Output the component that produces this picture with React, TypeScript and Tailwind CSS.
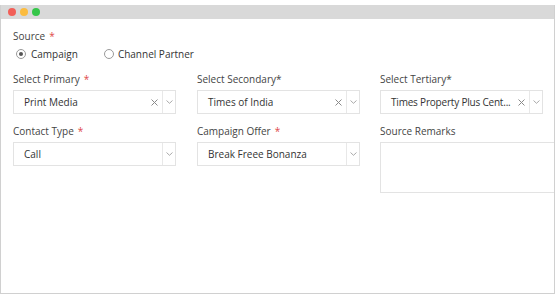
import React from "react";

const font = { fontFamily: '"Open Sans", "Liberation Sans", sans-serif' };

function Label({ text, required, tight }: { text: string; required?: boolean; tight?: boolean }) {
  return (
    <div className="h-[14px] text-[10px] leading-[14px] text-[#444]">
      {text}
      {required && (tight ? <span className="text-[#444]">*</span> : <span className="ml-[4px] text-[#e04848]">*</span>)}
    </div>
  );
}

function Chevron() {
  return (
    <svg width="7" height="4" viewBox="0 0 7 4" fill="none">
      <path d="M0.5 0.5 L3.5 3.3 L6.5 0.5" stroke="#a0a0a0" strokeWidth="0.9" />
    </svg>
  );
}

function Cross() {
  return (
    <svg width="7" height="7" viewBox="0 0 7 7" fill="none">
      <path d="M0.5 0.5 L6.5 6.5 M6.5 0.5 L0.5 6.5" stroke="#8a8a8a" strokeWidth="1" />
    </svg>
  );
}

function Select({ value, clearable, long }: { value: string; clearable?: boolean; long?: boolean }) {
  return (
    <div className="mt-[4px] flex h-[24px] w-[163px] items-center border border-[#e3e3e3] bg-white">
      <div
        className={
          long
            ? "min-w-0 flex-1 whitespace-nowrap pl-[10px] text-[10px] tracking-[-0.2px] text-[#333]"
            : "min-w-0 flex-1 overflow-hidden whitespace-nowrap pl-[10px] text-[10px] text-[#333]"
        }
      >
        {value}
      </div>
      {clearable && (
        <div className="flex w-[15px] items-center justify-center">
          <Cross />
        </div>
      )}
      <div className="flex h-full w-[13px] items-center justify-center border-l border-[#e8e8e8]">
        <Chevron />
      </div>
    </div>
  );
}

export default function App() {
  return (
    <div className="h-[299px] w-[555px] overflow-hidden bg-white pt-[5px]" style={font}>
      <div className="h-[289px] w-[555px] overflow-hidden border-b border-l border-r border-[#d0d0d0] bg-white">
        <div className="flex h-[14px] items-center gap-[4px] bg-[#d9d9d9] pl-[7px]">
          <span className="h-[8px] w-[8px] rounded-full bg-[#f25f58]" />
          <span className="h-[8px] w-[8px] rounded-full bg-[#fbbc40]" />
          <span className="h-[8px] w-[8px] rounded-full bg-[#35c649]" />
        </div>
        <div className="pl-[12px] pt-[10px]">
          <Label text="Source" required />
          <div className="mt-[4px] flex h-[14px] items-center text-[10px] text-[#333]">
            <span className="ml-[3px] flex h-[10px] w-[10px] items-center justify-center rounded-full border border-[#9a9a9a]">
              <span className="h-[4px] w-[4px] rounded-full bg-[#555]" />
            </span>
            <span className="ml-[5px]">Campaign</span>
            <span className="ml-[26px] h-[10px] w-[10px] rounded-full border border-[#9a9a9a]" />
            <span className="ml-[4px]">Channel Partner</span>
          </div>
          <div className="mt-[11px] grid grid-cols-[184px_183px_180px]">
            <div>
              <Label text="Select Primary" required />
              <Select value="Print Media" clearable />
            </div>
            <div>
              <Label text="Select Secondary" required tight />
              <Select value="Times of India" clearable />
            </div>
            <div>
              <Label text="Select Tertiary" required tight />
              <Select value="Times Property Plus Cent..." clearable long />
            </div>
          </div>
          <div className="mt-[10px] grid grid-cols-[184px_183px_180px]">
            <div>
              <Label text="Contact Type" required />
              <Select value="Call" />
            </div>
            <div>
              <Label text="Campaign Offer" required />
              <Select value="Break Freee Bonanza" />
            </div>
            <div>
              <Label text="Source Remarks" />
              <div className="mt-[4px] h-[51px] w-[180px] border border-[#e3e3e3] bg-white" />
            </div>
          </div>
        </div>
      </div>
    </div>
  );
}
